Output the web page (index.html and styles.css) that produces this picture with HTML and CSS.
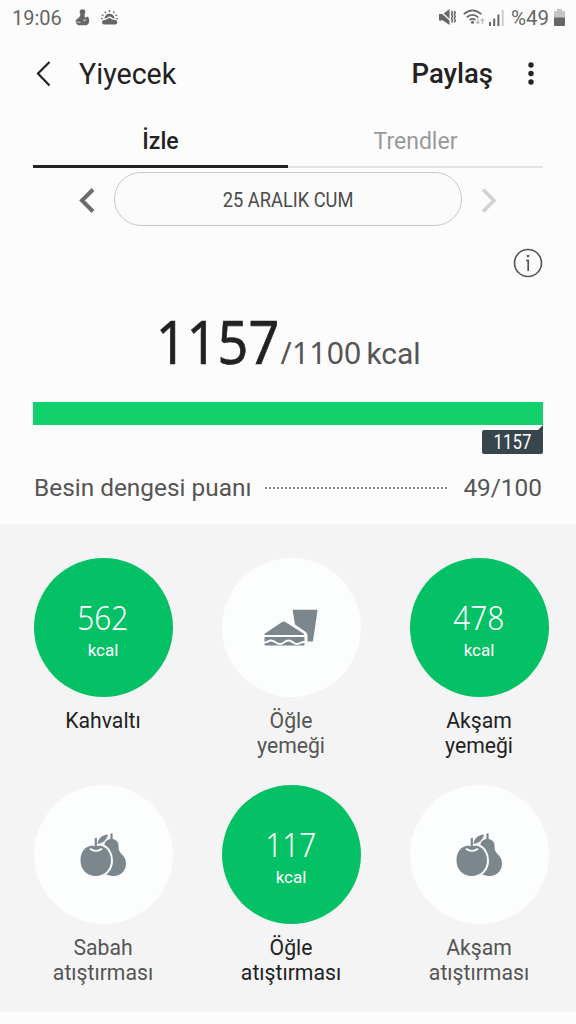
FILE: index.html
```html
<!DOCTYPE html>
<html lang="tr">
<head>
<meta charset="UTF-8" />
<meta name="viewport" content="width=device-width, initial-scale=1" />
<title>Yiyecek</title>
<link rel="stylesheet" href="styles.css">
</head>
<body>

<!-- Icons used more than once -->
<svg class="sprite" aria-hidden="true">
  <symbol id="fruit" viewBox="0 0 46 46">
    <path d="M31.500 8V1.500" fill="none" stroke="#7b868d" stroke-width="2.200"/>
    <path d="M24.500 13C24.500 9.500 27.500 7 31.500 7C35.500 7 38.500 9.500 38.500 13.500C38.500 18 39.500 20 42 22.500C44.800 25.300 46 28 46 31.500C46 39 40.500 44 34 44C31 44 28.500 43.400 26 42.500L20 20Z" fill="#7b868d"/>
    <path d="M10 14C12 13.300 13.500 14.500 15.500 14.500C18 14.500 19 13.300 21.500 14C27.500 15.600 31 22 31 28.500C31 37.500 24.500 44 15.700 44C7 44 .5 37.500 .5 28.500C.5 21 4 15.500 10 14Z" fill="#7b868d" stroke="#fcfdfd" stroke-width="4" paint-order="stroke"/>
    <path d="M15.800 16V6" fill="none" stroke="#7b868d" stroke-width="2.200"/>
    <path d="M17.500 12C18 6.500 22 3 28 2.500C26.500 8 23.500 11 17.500 12Z" fill="#7b868d"/>
    <path d="M10.500 17C13.500 19.500 18.500 19.500 21.500 17" fill="none" stroke="#fcfdfd" stroke-width="1.700" stroke-linecap="round"/>
  </symbol>
</svg>

<div class="status-bar">
  <span class="clock">19:06</span>
  <svg class="ic-figure" width="15" height="17" viewBox="0 0 15 17">
    <circle cx="7.500" cy="3" r="2.800"/>
    <path d="M5.500 5H9.500L10 9L12 7.500L13.500 8.500C15 12 14 15 11.500 16.200H3.500C1.500 15.500.3 13.500.8 11.200C2.500 9.500 4.500 8.500 5 7Z"/>
    <path d="M1.500 12.800L5.500 13.500M8.800 10L9.300 12L11.300 10.800" fill="none" stroke="#fcfcfc" stroke-width=".7"/>
  </svg>
  <svg class="ic-weather" width="17" height="15" viewBox="0 0 17 15">
    <path d="M3.500 8.800A5 5 0 0 1 13.500 8.800Q11.500 8.300 10.800 7.400Q8.300 5.400 5.800 8Q4.500 8 3.500 8.800Z"/>
    <path d="M2.800 14.500A2.300 2.300 0 0 1 3 10Q4.500 10 5.300 9.500Q8.300 6.600 10.800 9.300Q12.500 10.200 14.500 10A2.300 2.300 0 0 1 14.500 14.500Z"/>
    <path d="M8.500 0V2M3.700 1.500L4.800 3.200M13.300 1.500L12.200 3.200M.8 4.700L2.500 5.700M16.200 4.700L14.500 5.700M0 8.600H1.700M15.300 8.600H17" fill="none" stroke="#666" stroke-width="1.300"/>
  </svg>
  <div class="status-right">
    <svg width="17" height="17" viewBox="0 0 17 17">
      <path d="M0 5H4L10.500 0V16L4 11.500H0Z"/>
      <path d="M0 1L12 12" fill="none" stroke="#fcfcfc" stroke-width="1.300"/>
      <path d="M12.500 2L13.500 3.700L12.500 5.600L13.500 7.500L12.500 9.500L13.500 11.500L12.500 13.500M15.300 2L16.300 3.700L15.300 5.600L16.300 7.500L15.300 9.500L16.300 11.500L15.300 13.500" fill="none" stroke="#666" stroke-width="1.500"/>
    </svg>
    <svg class="ic-wifi" width="22" height="17" viewBox="0 0 22 17">
      <path d="M.7 5.200Q9.500 -2.400 18.300 5.200M3.700 8.300Q9.500 3.300 15.300 8.300M6.600 11.200Q9.500 8.700 12.400 11.200" fill="none" stroke="#666" stroke-width="1.700"/>
      <circle cx="9.500" cy="13.300" r="1.500"/>
      <path d="M14.800 9.500V14.500M13 12.700L14.800 14.700L16.600 12.700M19.500 15V10M17.700 11.800L19.500 9.800L21.300 11.800" fill="none" stroke="#bbb" stroke-width="1.200"/>
    </svg>
    <svg class="ic-signal" width="15" height="16" viewBox="0 0 15 16">
      <path d="M0 12H2V16H0ZM4.200 8.500H6.200V16H4.200ZM8.400 4.500H10.400V16H8.400Z"/>
      <path d="M12.700 0H14.700V16H12.700Z" fill="#ccc"/>
    </svg>
    <span class="battery-text">%49</span>
    <svg width="11" height="17" viewBox="0 0 11 17">
      <path d="M3 0H8V2H10Q11 2 11 3V9H0V3Q0 2 1 2H3Z" fill="#c4c4c4"/>
      <path d="M0 8.500H11V16Q11 17 10 17H1Q0 17 0 16Z"/>
    </svg>
  </div>
</div>

<header class="app-bar">
  <svg width="15" height="26" viewBox="0 0 15 26"><path d="M13.500 1L2 12.500L13.500 24.500" fill="none" stroke="#222" stroke-width="2.200"/></svg>
  <h1>Yiyecek</h1>
  <span class="share">Paylaş</span>
  <svg class="ic-more" width="6" height="24" viewBox="0 0 6 24"><circle cx="3" cy="3" r="2.700"/><circle cx="3" cy="11.500" r="2.700"/><circle cx="3" cy="20" r="2.700"/></svg>
</header>

<nav class="tabs">
  <div class="tab active">İzle</div>
  <div class="tab">Trendler</div>
</nav>

<div class="date-row">
  <svg class="prev" width="16" height="25" viewBox="0 0 16 25"><path d="M14 1.500L3 12.500L14 23.500" fill="none" stroke="#6c6c6c" stroke-width="4"/></svg>
  <div class="date-pill"><span>25 ARALIK CUM</span></div>
  <svg class="next" width="16" height="25" viewBox="0 0 16 25"><path d="M2 1.500L13 12.500L2 23.500" fill="none" stroke="#d2d2d2" stroke-width="3.600"/></svg>
</div>

<div class="info-row">
  <svg width="30" height="30" viewBox="0 0 30 30">
    <circle cx="15" cy="15" r="13.500" fill="none" stroke="#555" stroke-width="1.600"/>
    <path d="M13 12.500H15.200V23" fill="none" stroke="#555" stroke-width="1.700"/>
    <circle cx="15" cy="8" r="1.300" fill="#555"/>
  </svg>
</div>

<div class="total">
  <span class="total-now">1157</span><span class="total-goal">/1100</span><span class="total-unit">kcal</span>
</div>

<div class="bar"></div>
<div class="bar-label"><div class="tip"><span>1157</span></div></div>

<div class="score">
  <span class="score-name">Besin dengesi puanı</span>
  <span class="dots"></span>
  <span class="score-value">49/100</span>
</div>

<main class="meals">
  <div class="meal filled">
    <div class="circle"><b>562</b><small>kcal</small></div>
    <p>Kahvaltı</p>
  </div>
  <div class="meal">
    <div class="circle">
      <svg width="54" height="37" viewBox="0 0 54 37" fill="#7b868d">
        <path d="M29.500.8H53Q53.700.8 53.500 1.500L49 31.800Q48.800 32.500 48 32.500H43.500V26.500Q43.500 24 41.500 22.700L31 15.500L28.700 1.500Q28.600.8 29.500.8Z"/>
        <path d="M.5 26Q0 25.500 1 24.500L18.500 12.800Q19.700 12 21 12.800L39.500 24.500Q40.500 25.500 40 26Z"/>
        <path d="M.5 28H40.500V35.500Q40.500 36.500 39.500 36.500H1.500Q.5 36.500 .5 35.500Z"/>
        <path d="M0 33.500C3 34 4 31.500 7 31.500C11.500 31.500 11.500 35 16 35C20.500 35 20 31.500 24.500 31.500C29 31.500 28.500 35 33 35C36.500 35 37 32.500 41 33" fill="none" stroke="#fcfdfd" stroke-width="2"/>
      </svg>
    </div>
    <p>Öğle<br>yemeği</p>
  </div>
  <div class="meal filled">
    <div class="circle"><b>478</b><small>kcal</small></div>
    <p>Akşam<br>yemeği</p>
  </div>
  <div class="meal">
    <div class="circle"><svg width="46" height="46"><use href="#fruit"/></svg></div>
    <p>Sabah<br>atıştırması</p>
  </div>
  <div class="meal filled">
    <div class="circle"><b>117</b><small>kcal</small></div>
    <p>Öğle<br>atıştırması</p>
  </div>
  <div class="meal">
    <div class="circle"><svg width="46" height="46"><use href="#fruit"/></svg></div>
    <p>Akşam<br>atıştırması</p>
  </div>
</main>

</body>
</html>
```
FILE: styles.css
```css
/* Reset */
* {
  margin: 0; padding: 0; box-sizing: border-box;
}
body {
  height: 1024px;
  background: #fcfcfc;
  font-family: Roboto, sans-serif;
  color: #222;
  overflow: hidden;
}
svg {
  display: block;
  flex: none;
}
.sprite {
  display: none;
}

/* Status bar */
.status-bar {
  display: flex;
  align-items: center;
  height: 35px;
  padding: 0 11px 0 12px;
  fill: #666;
  color: #666;
  font-size: 20px;
}
.clock {
  width: 63px;
}
.ic-weather {
  margin-left: 11px;
}
.status-right {
  display: flex;
  align-items: center;
  margin-left: auto;
}
.ic-wifi {
  margin-left: 7px;
}
.ic-signal {
  margin-left: 4px;
}
.battery-text {
  margin: 0 5px 0 7px;
  font-size: 20.500px;
}

/* App bar */
.app-bar {
  display: flex;
  align-items: center;
  height: 77px;
  padding: 0 42px 0 36px;
}
h1 {
  margin-left: 28px;
  font-size: 28.600px;
  font-weight: 400;
}
.share {
  margin-left: auto;
  font-size: 27.500px;
  font-weight: 500;
}
.ic-more {
  margin-left: 35px;
  fill: #222;
}

/* Tabs */
.tabs {
  display: flex;
  height: 56px;
  margin: 0 33px;
}
.tab {
  flex: 1;
  padding-top: 16px;
  border-bottom: 2px solid #e3e3e3;
  color: #999;
  font-size: 23px;
  line-height: 28px;
  text-align: center;
}
.tab.active {
  border-bottom: 3px solid #222;
  color: #222;
  font-weight: 500;
}

/* Date selector */
.date-row {
  display: flex;
  align-items: center;
  justify-content: center;
  gap: 19px;
  margin-top: 4px;
}
.date-pill {
  width: 348px;
  height: 54px;
  border: 1px solid #c8c8c8;
  border-radius: 27px;
  background: #fafafa;
  color: #4a4a4a;
  font-size: 21px;
  line-height: 54px;
  text-align: center;
}
.date-pill span {
  display: inline-block;
  transform: scaleX(.87);
}
.prev, .next {
  margin-top: 2px;
}
.info-row {
  display: flex;
  justify-content: flex-end;
  height: 52px;
  padding: 22px 33px 0 0;
}

/* Calories */
.total {
  display: flex;
  align-items: baseline;
  justify-content: center;
  height: 124px;
  padding-top: 22px;
  color: #555;
  font-size: 30px;
}
.total-now {
  margin-left: -13px;
  color: #222;
  font-family: "Noto Sans", sans-serif;
  font-size: 60px;
  font-weight: 400;
  transform: scaleX(.9);
  transform-origin: right;
  -webkit-text-stroke: .6px #222;
}
.total-goal {
  margin-left: 1px;
  font-family: "Noto Sans", sans-serif;
  font-size: 30px;
  letter-spacing: .2px;
}
.total-unit {
  margin-left: 5px;
}
.bar {
  height: 23px;
  margin: 0 33px;
  background: #12d06c;
}
.bar-label {
  display: flex;
  justify-content: flex-end;
  height: 31px;
  padding: 5px 33px 0 0;
}
.tip {
  position: relative;
  width: 61px;
  height: 24px;
  border-radius: 2px;
  background: #37464d;
  color: #fff;
  font-size: 20px;
  line-height: 24px;
  text-align: center;
}
.tip span {
  display: inline-block;
  transform: scaleX(.84);
}
.tip::before {
  content: "";
  position: absolute;
  top: -5px; right: 0;
  border-left: 6px solid transparent;
  border-bottom: 6px solid #37464d;
}
.score {
  display: flex;
  align-items: center;
  height: 68px;
  padding: 0 34px 5px;
  color: #555;
  font-size: 24.400px;
}
.dots {
  flex: 1;
  height: 2px;
  margin: 0 14px;
  background: repeating-linear-gradient(90deg, #888 0 2px, transparent 2px 4px);
}

/* Meals */
.meals {
  display: grid;
  grid-template-columns: repeat(3, 188px);
  grid-auto-rows: 227px;
  height: 488px;
  padding: 34px 0 0 9px;
  background: #f4f4f4;
}
.meal {
  display: flex;
  flex-direction: column;
  align-items: center;
  color: #555;
}
.circle {
  display: flex;
  flex-direction: column;
  align-items: center;
  justify-content: center;
  width: 139px;
  height: 139px;
  border-radius: 50%;
  background: #fcfdfd;
  color: #fff;
}
.circle b {
  margin-top: 6px;
  font-family: "Noto Sans", sans-serif;
  font-size: 33.500px;
  font-weight: 300;
  line-height: 40px;
  transform: scaleX(.89);
}
.circle small {
  font-size: 17px;
  line-height: 27px;
}
.meal p {
  margin-top: 11px;
  font-size: 21.200px;
  line-height: 25px;
  text-align: center;
}
.filled {
  color: #222;
}
.filled .circle {
  background: #04c166;
}
```
